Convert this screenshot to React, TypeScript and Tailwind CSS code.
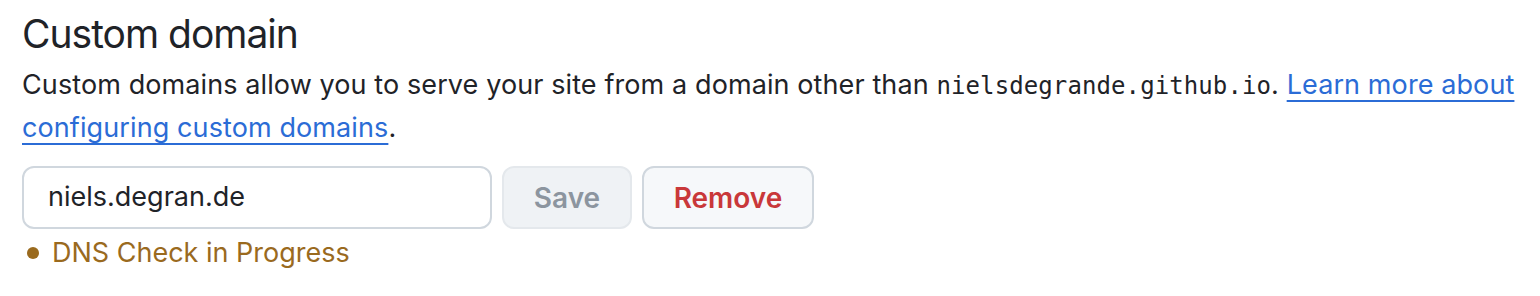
export default function App() {
  return (
    <div className="w-[1540px] h-[296px] bg-white pl-[22px] pt-[9px] font-['Inter','Noto_Sans',sans-serif] text-[#1f2328]">
      {/* Heading */}
      <h2 className="text-[39px] leading-[50px] font-normal tracking-[-1px]">Custom domain</h2>

      {/* Description */}
      <p className="mt-[5px] text-[27px] leading-[42px] w-[1512px] tracking-[0.1px]">
        Custom domains allow you to serve your site from a domain other than{" "}
        <code className="font-['DejaVu_Sans_Mono','Liberation_Mono',monospace] text-[24px] tracking-[0.1px]">
          nielsdegrande.github.io
        </code>
        .{" "}
        <a href="#" className="text-[#2b6cd6] underline underline-offset-[6px] decoration-[2px]">
          Learn more about configuring custom domains
        </a>
        .
      </p>

      {/* Form row */}
      <div className="mt-[17px] flex items-center gap-[10px]">
        <div className="w-[470px] h-[63px] rounded-[12px] border-2 border-[#d0d7de] flex items-center px-[24px] text-[27px]">
          niels.degran.de
        </div>
        <button className="w-[130px] h-[63px] rounded-[12px] border-2 border-[#e4e8ec] bg-[#eff2f5] text-[#8c959f] text-[28px] font-semibold">
          Save
        </button>
        <button className="w-[172px] h-[63px] rounded-[12px] border-2 border-[#d0d7de] bg-[#f6f8fa] text-[#c9383a] text-[28px] font-semibold">
          Remove
        </button>
      </div>

      {/* Status */}
      <div className="mt-[4px] flex items-center gap-[13px] pl-[5px] text-[27px] leading-[40px] text-[#9a6a1e]">
        <span className="block w-[12px] h-[12px] shrink-0 rounded-full bg-[#9a6a1e]" />
        <span>DNS Check in Progress</span>
      </div>
    </div>
  );
}
